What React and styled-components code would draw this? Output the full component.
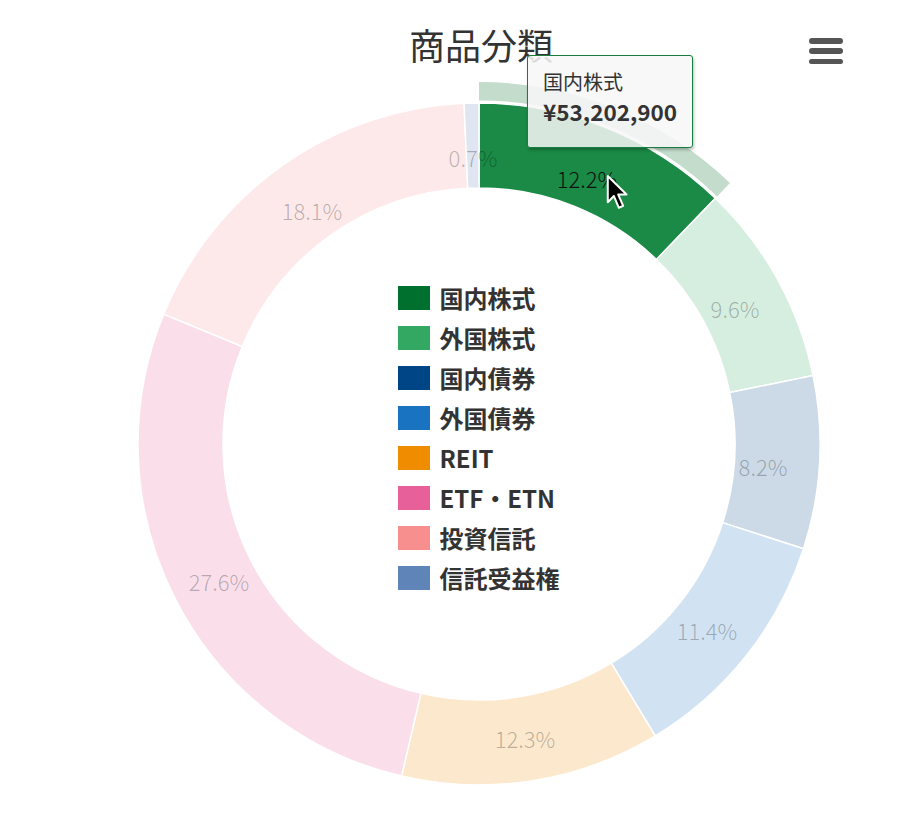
import React from "react";
import styled, { createGlobalStyle } from "styled-components";

const GlobalStyle = createGlobalStyle`
  html, body { margin: 0; padding: 0; background: #ffffff; }
  body { font-family: "Noto Sans CJK JP", "Noto Sans", sans-serif; }
`;

const CX = 479;
const CY = 444;
const R_OUT = 341;
const R_IN = 256;

const data = [
  { name: "国内株式", pct: 12.2, color: "#00702f", hover: "#1a8a46", label: [587, 178] },
  { name: "外国株式", pct: 9.6, color: "#33a862", label: [735, 308] },
  { name: "国内債券", pct: 8.2, color: "#004585", label: [763, 466] },
  { name: "外国債券", pct: 11.4, color: "#1a73c0", label: [707, 630] },
  { name: "REIT", pct: 12.3, color: "#ef8c00", label: [525, 738] },
  { name: "ETF・ETN", pct: 27.6, color: "#e8609a", label: [219, 581] },
  { name: "投資信託", pct: 18.1, color: "#f78f8f", label: [312, 210] },
  { name: "信託受益権", pct: 0.7, color: "#5f84b8", label: [473, 157] },
];

const total = data.reduce((s, d) => s + d.pct, 0);

function pt(r, a) {
  const rad = (a * Math.PI) / 180;
  return [CX + r * Math.sin(rad), CY - r * Math.cos(rad)];
}

function arcPath(r0, r1, a0, a1) {
  const large = a1 - a0 > 180 ? 1 : 0;
  const [x0, y0] = pt(r1, a0);
  const [x1, y1] = pt(r1, a1);
  const [x2, y2] = pt(r0, a1);
  const [x3, y3] = pt(r0, a0);
  return `M${x0} ${y0} A${r1} ${r1} 0 ${large} 1 ${x1} ${y1} L${x2} ${y2} A${r0} ${r0} 0 ${large} 0 ${x3} ${y3} Z`;
}

let acc = 0;
const slices = data.map((d) => {
  const a0 = (acc / total) * 360;
  acc += d.pct;
  const a1 = (acc / total) * 360;
  return { ...d, a0, a1 };
});

const Page = styled.div`
  position: relative;
  width: 920px;
  height: 840px;
  overflow: hidden;
  display: flex;
  flex-direction: column;
  background: #ffffff;
`;

const TitleBar = styled.header`
  display: grid;
  grid-template-columns: 1fr auto 1fr;
  align-items: center;
  height: 48px;
  margin-top: 20px;
  padding: 0 77px 0 119px;
`;

const Title = styled.h1`
  grid-column: 2;
  margin: 0;
  font-size: 36px;
  line-height: 48px;
  font-weight: 400;
  color: #333333;
`;

const MenuButton = styled.button`
  grid-column: 3;
  justify-self: end;
  align-self: start;
  margin-top: 18px;
  width: 34px;
  height: 26px;
  padding: 0;
  border: 0;
  background: none;
  display: flex;
  flex-direction: column;
  justify-content: space-between;
`;

const MenuBar = styled.span`
  display: block;
  height: 5.5px;
  border-radius: 3px;
  background: #555555;
`;

const ChartArea = styled.div`
  flex: 1;
  display: grid;
  place-items: center;
`;

const ChartSvg = styled.svg`
  grid-area: 1 / 1;
  width: 920px;
  height: 772px;
  overflow: visible;
`;

const SliceLabel = styled.text`
  font-family: "Noto Sans CJK JP", "Noto Sans", sans-serif;
  font-size: 22px;
  font-weight: 300;
  fill: ${(p) => (p.$active ? "#111111" : "rgba(0,0,0,0.27)")};
`;

const Legend = styled.ul`
  grid-area: 1 / 1;
  list-style: none;
  margin: 0 0 32px 37px;
  padding: 0;
  display: flex;
  flex-direction: column;
  gap: 16px;
`;

const LegendItem = styled.li`
  display: flex;
  align-items: center;
  gap: 10px;
  height: 24px;
`;

const Swatch = styled.span`
  width: 32px;
  height: 24px;
  background: ${(p) => p.$color};
  flex: none;
`;

const LegendText = styled.span`
  font-size: 24px;
  line-height: 24px;
  font-weight: 700;
  color: #333333;
  white-space: nowrap;
`;

const Tooltip = styled.div`
  position: absolute;
  left: 527px;
  top: 55px;
  width: 166px;
  height: 93px;
  box-sizing: border-box;
  padding: 12px 14px 0 15px;
  background: rgba(247, 247, 247, 0.86);
  border: 1.5px solid #1a7d40;
  border-radius: 3px;
  box-shadow: 1px 2px 3px rgba(0, 0, 0, 0.25);
`;

const TipName = styled.div`
  font-size: 20px;
  line-height: 28px;
  color: #333333;
`;

const TipValue = styled.div`
  font-size: 22.5px;
  line-height: 30px;
  font-weight: 700;
  color: #333333;
`;

const Cursor = styled.svg`
  position: absolute;
  left: 604px;
  top: 173px;
  width: 26px;
  height: 40px;
  overflow: visible;
`;

export default function App() {
  const hovered = slices[0];
  return (
    <>
      <GlobalStyle />
      <Page>
        <TitleBar>
          <Title>商品分類</Title>
          <MenuButton aria-label="メニュー">
            <MenuBar />
            <MenuBar />
            <MenuBar />
          </MenuButton>
        </TitleBar>
        <ChartArea>
          <ChartSvg viewBox="0 68 920 772">
            <path
              d={arcPath(343.5, 362, hovered.a0, hovered.a1)}
              fill="#c3dccb"
            />
            {slices.map((s, i) => (
              <path
                key={s.name}
                d={arcPath(R_IN, R_OUT, s.a0, s.a1)}
                fill={i === 0 ? s.hover : s.color}
                fillOpacity={i === 0 ? 1 : 0.2}
                stroke="#ffffff"
                strokeWidth="1.5"
                strokeLinejoin="round"
              />
            ))}
            {slices.map((s, i) => (
              <SliceLabel
                key={s.name + "l"}
                x={s.label[0]}
                y={s.label[1]}
                textAnchor="middle"
                dominantBaseline="central"
                $active={i === 0}
              >
                {s.pct.toFixed(1)}%
              </SliceLabel>
            ))}
          </ChartSvg>
          <Legend>
            {data.map((d) => (
              <LegendItem key={d.name}>
                <Swatch $color={d.color} />
                <LegendText>{d.name}</LegendText>
              </LegendItem>
            ))}
          </Legend>
        </ChartArea>
        <Tooltip>
          <TipName>国内株式</TipName>
          <TipValue>¥53,202,900</TipValue>
        </Tooltip>
        <Cursor viewBox="0 0 16 26">
          <path
            d="M2 2 L2 19 L6 15 L9.2 22.6 L12 21.4 L8.8 14 L14.2 14 Z"
            fill="#000000"
            stroke="#ffffff"
            strokeWidth="1.3"
            strokeLinejoin="round"
          />
        </Cursor>
      </Page>
    </>
  );
}
